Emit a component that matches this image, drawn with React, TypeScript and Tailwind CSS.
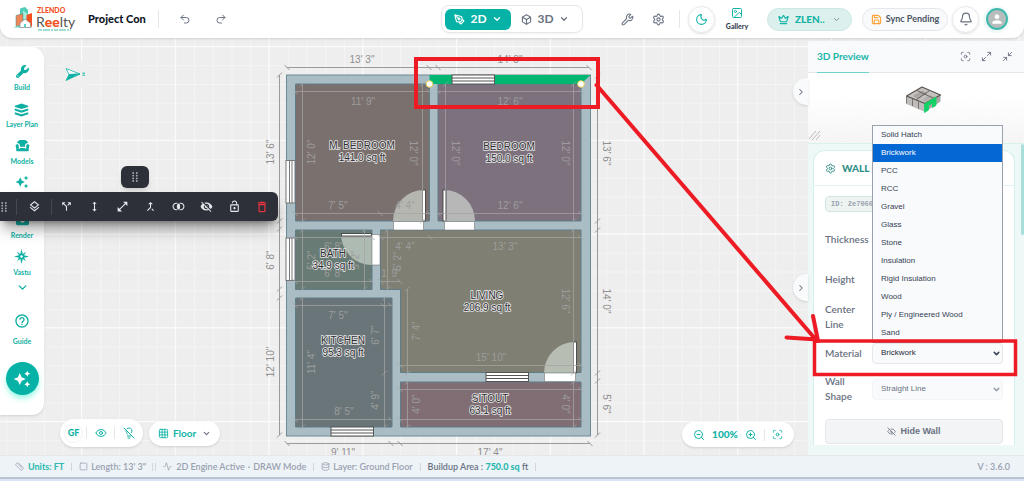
import type { ReactNode } from "react";
import {
  Activity,
  Bell,
  Box,
  ChevronDown,
  ChevronRight,
  Crown,
  Database,
  Eye,
  EyeOff,
  Focus,
  Grid3x3,
  Image as ImageIcon,
  LightbulbOff,
  Maximize2,
  Minimize2,
  Moon,
  PenTool,
  Redo2,
  Ruler,
  Save,
  Settings,
  Square,
  Undo2,
  Wrench,
  ZoomIn,
  ZoomOut,
} from "lucide-react";
import { FaCamera, FaWrench } from "react-icons/fa6";
import { RiSofaFill } from "react-icons/ri";
import {
  MdAutoAwesome,
  MdCallMerge,
  MdCallSplit,
  MdDeleteOutline,
  MdHeight,
  MdHelpOutline,
  MdJoinInner,
  MdLockOpen,
  MdOpenInFull,
  MdOutlineLayers,
  MdPerson,
  MdVisibilityOff,
} from "react-icons/md";

type Dim = {
  dir: "h" | "v";
  at: number;
  ticks: number[];
};

type Label = [text: string, x: number, y: number, rotate?: number];

const outerDims: Dim[] = [
  { dir: "h", at: 67.5, ticks: [287, 429, 438, 589] },
  { dir: "h", at: 443.5, ticks: [287, 391, 400, 590] },
  { dir: "v", at: 279.5, ticks: [75, 221, 229, 289, 298, 435] },
  { dir: "v", at: 597.5, ticks: [76, 221, 230, 373, 381, 435] },
];

const outerLabels: Label[] = [
  [`13' 3"`, 362, 59],
  [`14' 8"`, 510, 59],
  [`9' 11"`, 343, 452],
  [`17' 4"`, 490, 452],
  [`13' 6"`, 270, 152, -90],
  [`6' 8"`, 270, 260, -90],
  [`12' 10"`, 270, 362, -90],
  [`13' 6"`, 606, 153, 90],
  [`14' 0"`, 606, 301, 90],
  [`5' 6"`, 606, 404, 90],
];

const innerDims: Dim[] = [
  { dir: "h", at: 91.5, ticks: [295, 429] },
  { dir: "h", at: 91.5, ticks: [438, 581] },
  { dir: "h", at: 213.5, ticks: [295, 380, 429] },
  { dir: "h", at: 213.5, ticks: [438, 581] },
  { dir: "v", at: 302.5, ticks: [84, 221] },
  { dir: "v", at: 422.5, ticks: [84, 221] },
  { dir: "v", at: 445.5, ticks: [84, 221] },
  { dir: "v", at: 573.5, ticks: [84, 221] },
  { dir: "h", at: 237.5, ticks: [295, 372] },
  { dir: "h", at: 281.5, ticks: [295, 372] },
  { dir: "v", at: 302.5, ticks: [230, 289] },
  { dir: "v", at: 364.5, ticks: [230, 289] },
  { dir: "h", at: 237.5, ticks: [381, 430, 581] },
  { dir: "h", at: 281.5, ticks: [381, 400] },
  { dir: "v", at: 387.5, ticks: [230, 289] },
  { dir: "v", at: 573.5, ticks: [230, 373] },
  { dir: "v", at: 407.5, ticks: [289, 373] },
  { dir: "h", at: 365.5, ticks: [400, 581] },
  { dir: "h", at: 305.5, ticks: [295, 383, 391] },
  { dir: "h", at: 419.5, ticks: [295, 391] },
  { dir: "v", at: 302.5, ticks: [298, 427] },
  { dir: "v", at: 384.5, ticks: [298, 373, 427] },
  { dir: "h", at: 389.5, ticks: [400, 581] },
  { dir: "h", at: 419.5, ticks: [400, 581] },
  { dir: "v", at: 407.5, ticks: [382, 427] },
  { dir: "v", at: 573.5, ticks: [382, 427] },
];

const innerLabels: Label[] = [
  [`11' 9"`, 363, 101],
  [`12' 0"`, 311, 152, -90],
  [`12' 0"`, 413, 153, 90],
  [`7' 5"`, 338, 205],
  [`4' 4"`, 405, 205],
  [`12' 6"`, 510, 101],
  [`12' 0"`, 455, 153, 90],
  [`12' 0"`, 565, 153, 90],
  [`12' 6"`, 510, 205],
  [`6' 8"`, 334, 246],
  [`6' 8"`, 334, 273],
  [`5' 2"`, 311, 260, -90],
  [`5' 2"`, 355, 260, -90],
  [`4' 4"`, 405, 246],
  [`5' 2"`, 397, 261, -90],
  [`1' 9"`, 391, 273],
  [`13' 3"`, 505, 246],
  [`12' 6"`, 565, 301, 90],
  [`7' 4"`, 416, 331, -90],
  [`15' 10"`, 491, 357],
  [`7' 5"`, 338, 315],
  [`11' 4"`, 311, 362, -90],
  [`6' 7"`, 375, 335, -90],
  [`4' 9"`, 375, 400, -90],
  [`8' 5"`, 344, 411],
  [`4' 0"`, 416, 404, -90],
  [`4' 0"`, 565, 404, 90],
];

const rooms = [
  { name: "M. BEDROOM", area: "141.0 sq ft", x: 362, y: 146, fill: "#7a706e", points: "295.5,84 429.5,84 429.5,221 295.5,221" },
  { name: "BEDROOM", area: "150.0 sq ft", x: 509, y: 147, fill: "#7d717e", points: "438,84 581,84 581,221 438,221" },
  { name: "BATH", area: "34.9 sq ft", x: 333, y: 254, fill: "#687b74", points: "295.5,230 372,230 372,289.5 295.5,289.5" },
  { name: "LIVING", area: "206.9 sq ft", x: 487, y: 296, fill: "#7f7f73", points: "380.5,230 581,230 581,372.5 400.5,372.5 400.5,289.5 380.5,289.5" },
  { name: "KITCHEN", area: "95.3 sq ft", x: 343, y: 341, fill: "#697578", points: "295.5,298 392,298 392,427 295.5,427" },
  { name: "SITOUT", area: "63.1 sq ft", x: 490, y: 399, fill: "#806e74", points: "400.5,382 581,382 581,427 400.5,427" },
];

const doors = [
  { sector: "M424 221 L424 190 A31 31 0 0 0 393 221 Z", leaf: [422.5, 190, 3, 31], gap: [393.5, 221.5, 30, 8.5] },
  { sector: "M444 221 L444 190 A31 31 0 0 1 475 221 Z", leaf: [443, 190, 3, 31], gap: [444.5, 221.5, 30, 8.5] },
  { sector: "M372 234 L341 234 A31 31 0 0 0 372 265 Z", leaf: [341.5, 233.5, 30, 2.5], gap: [372, 234.5, 8, 30.5] },
  { sector: "M575 373 L575 342 A31 31 0 0 0 544 373 Z", leaf: [573.5, 342, 3, 31], gap: [544.5, 373, 31, 8.5] },
];

const windowsH = [
  [452, 75],
  [331, 427],
  [486, 372.5],
];
const windowsV = [
  [286, 160.5],
  [286, 238],
];

function DimLine({ dir, at, ticks }: Dim) {
  const a = ticks[0];
  const b = ticks[ticks.length - 1];
  return (
    <g>
      {dir === "h" ? <path d={`M${a} ${at}H${b}`} /> : <path d={`M${at} ${a}V${b}`} />}
      {ticks.map((t) =>
        dir === "h" ? (
          <path key={t} d={`M${t - 2.5} ${at - 2.5}l5 5`} />
        ) : (
          <path key={t} d={`M${at - 2.5} ${t + 2.5}l5 -5`} />
        ),
      )}
    </g>
  );
}

function DimLabels({ items }: { items: Label[] }) {
  return (
    <>
      {items.map(([text, x, y, rotate = 0], i) => (
        <text key={i} transform={`translate(${x} ${y}) rotate(${rotate})`} dy="3.5" textAnchor="middle">
          {text}
        </text>
      ))}
    </>
  );
}

function FloorPlan() {
  return (
    <svg className="absolute inset-0 h-full w-full font-['Liberation_Sans',sans-serif]" aria-label="Floor plan">
      <defs>
        <pattern id="minor" x="81.5" y="46.5" width="18.75" height="18.75" patternUnits="userSpaceOnUse">
          <path d="M0 .5H19M.5 0V19" stroke="#f4f4f4" fill="none" />
        </pattern>
        <pattern id="major" x="81" y="46" width="93.75" height="93.75" patternUnits="userSpaceOnUse">
          <path d="M0 .5H94M.5 0V94" stroke="#fcfcfc" fill="none" />
        </pattern>
      </defs>
      <rect width="100%" height="100%" fill="#eeeeee" />
      <rect width="100%" height="100%" fill="url(#minor)" />
      <rect width="100%" height="100%" fill="url(#major)" />

      {/* North marker */}
      <rect x="62" y="61" width="24" height="27" fill="#efefef" />
      <path d="M66 68.5 80 74 69 74.5Z" fill="#fff" stroke="#12b3a6" strokeWidth=".8" />
      <path d="M80 74 66 80.5 69 74.5Z" fill="#12b3a6" stroke="#12b3a6" strokeWidth=".8" />
      <path d="M82.5 73.2h2.5M82.5 75.2h2.5" stroke="#12b3a6" />

      <rect x="286.5" y="75" width="304" height="361" fill="#abbdc4" stroke="#6b8b96" />
      {rooms.map((r) => (
        <polygon key={r.name} points={r.points} fill={r.fill} stroke="#5f7d88" />
      ))}

      {/* Selected wall */}
      <path d="M429.5 75H590.5L581 84H429.5Z" fill="#00b670" />

      {doors.map((d) => (
        <g key={d.sector}>
          <path d={d.sector} fill="#e8f0e8" fillOpacity=".55" />
          <rect x={d.leaf[0]} y={d.leaf[1]} width={d.leaf[2]} height={d.leaf[3]} fill="#fff" stroke="#444" strokeWidth=".9" />
          <rect x={d.gap[0]} y={d.gap[1]} width={d.gap[2]} height={d.gap[3]} fill="#fff" stroke="#777" strokeWidth=".6" />
        </g>
      ))}
      {windowsH.map(([x, y]) => (
        <g key={`${x}-${y}`} stroke="#555">
          <rect x={x} y={y} width="42.5" height="9" fill="#fff" />
          <path d={`M${x} ${y + 3}h42.5M${x} ${y + 6}h42.5`} />
        </g>
      ))}
      {windowsV.map(([x, y]) => (
        <g key={`${x}-${y}`} stroke="#777">
          <rect x={x} y={y} width="9" height="42.5" fill="#fff" />
          <path d={`M${x + 3.5} ${y}v42.5M${x + 6} ${y}v42.5`} />
        </g>
      ))}

      <g stroke="#a4a4a4" strokeOpacity=".75" fill="none">
        {innerDims.map((d, i) => (
          <DimLine key={i} {...d} />
        ))}
      </g>
      <g stroke="#9a9a9a" fill="none">
        {outerDims.map((d, i) => (
          <DimLine key={i} {...d} />
        ))}
      </g>
      <g fill="#9d9d9d" fontSize="10">
        <DimLabels items={innerLabels} />
      </g>
      <g fill="#8f8f8f" fontSize="10">
        <DimLabels items={outerLabels} />
      </g>

      <g fill="#2f2f33" stroke="#e6e6e6" strokeWidth="1.6" paintOrder="stroke" fontSize="10" textAnchor="middle">
        {rooms.map((r) => (
          <g key={r.name}>
            <text x={r.x} y={r.y + 3}>{r.name}</text>
            <text x={r.x} y={r.y + 15}>{r.area}</text>
          </g>
        ))}
      </g>

      <g fill="#fff" stroke="#ecd35a">
        <circle cx="429.5" cy="84" r="3.3" />
        <circle cx="581" cy="84" r="3.3" />
      </g>
    </svg>
  );
}

function Logo() {
  return (
    <svg width="66" height="26" viewBox="0 0 66 26" role="img" aria-label="Zlendo Realty">
      <path d="M7 2.5 12 1l3 3v17H7Z" fill="#4fcdb9" />
      <path d="M10 4.500l4 3v8l-4-2Z" fill="#a5efe0" />
      <path d="M3 9.500l7-2v11l-7 2Z" fill="#f0875c" stroke="#3a8f84" strokeWidth=".5" />
      <path d="M13.500 9 19 7v14l-5.500-4Z" fill="#f4511e" />
      <path d="M0 21.500 8 19l4-5.500 7 8Z" fill="#5fd3c0" />
      <path d="M7 21.500v-4.500l5-4 5.500 4v4.500Z" fill="#fff" stroke="#777" strokeWidth=".6" />
      <path d="M11 18h2v3h-2Z" fill="#5fd3c0" />
      <text x="24" y="7" fontSize="7" fontWeight="900" fill="#f4511e" fontFamily="Lato, sans-serif">
        ZLENDO
      </text>
      <text x="23" y="21" fontSize="14" fill="#555" fontFamily="Lato, sans-serif">
        R<tspan fontWeight="900" fill="#f4511e">ee</tspan>lty
      </text>
      <path d="M25 24h33" stroke="#3fbfae" strokeDasharray="4 1 7 1 2 1" />
    </svg>
  );
}

function Header() {
  return (
    <header className="relative z-10 grid h-[38px] grid-cols-[1fr_auto_1fr] items-center rounded-b-xl bg-white shadow-sm">
      <div className="flex items-center pl-[13px]">
        <Logo />
        <h1 className="ml-[9px] text-[11px] font-black text-gray-900">Project Con</h1>
        <span className="ml-3 h-[18px] w-px bg-gray-200" />
        <div className="ml-5 flex gap-6 text-gray-500">
          <button aria-label="Undo">
            <Undo2 size={12} />
          </button>
          <button aria-label="Redo">
            <Redo2 size={12} />
          </button>
        </div>
      </div>

      <div className="flex h-7 items-center rounded-lg border border-gray-200 p-[3px] text-xs font-bold shadow-xs">
        <button className="flex h-[21px] w-[66px] items-center justify-center gap-[5px] rounded-md bg-[#06b1a5] text-white">
          <PenTool size={11} strokeWidth={2.5} />
          2D
          <ChevronDown size={10} strokeWidth={3} />
        </button>
        <button className="flex h-[21px] w-[68px] items-center justify-center gap-[5px] text-gray-500">
          <Box size={11} strokeWidth={2.5} />
          3D
          <ChevronDown size={10} strokeWidth={3} />
        </button>
      </div>

      <div className="flex items-center justify-end pr-[14px] text-gray-500">
        <button aria-label="Tools" className="mr-[18px]">
          <Wrench size={13} />
        </button>
        <button aria-label="Settings" className="mr-[14px]">
          <Settings size={13} />
        </button>
        <span className="h-[18px] w-px bg-gray-200" />
        <button
          aria-label="Dark mode"
          className="ml-2 flex size-[27px] items-center justify-center rounded-full border border-gray-200 text-[#12b3a6] shadow-sm"
        >
          <Moon size={13} />
        </button>
        <button className="ml-[6px] flex w-8 flex-col items-center gap-[3px] text-[7px] leading-[9px] font-black text-gray-700">
          <ImageIcon size={12} className="text-[#12b3a6]" />
          Gallery
        </button>
        <button className="ml-[14px] flex h-[23px] w-[85px] items-center rounded-full border border-[#cbe8e5] bg-[#dcf1ee] px-[10px] text-[10px] font-black text-[#12b3a6]">
          <Crown size={11} strokeWidth={2.5} className="mr-[6px]" />
          ZLEN..
          <ChevronDown size={9} className="ml-auto text-gray-500" />
        </button>
        <button className="ml-[10px] flex h-[23px] w-[86px] items-center justify-center gap-1 rounded-full border border-gray-200 bg-gray-50 text-[9px] font-bold whitespace-nowrap text-gray-600">
          <Save size={11} strokeWidth={2.5} className="text-[#fba63c]" />
          Sync Pending
        </button>
        <button
          aria-label="Notifications"
          className="ml-1 flex size-[27px] items-center justify-center rounded-full border border-gray-200 shadow-sm"
        >
          <Bell size={14} />
        </button>
        <button aria-label="Account" className="ml-1 flex size-[27px] items-center justify-center rounded-full bg-[#effaf8]">
          <span className="flex size-[22px] items-center justify-center rounded-full border-2 border-[#3fb8ad] bg-[#b9bcbc] text-white">
            <MdPerson size={14} />
          </span>
        </button>
      </div>
    </header>
  );
}

function SideItem({ icon, label, text }: { icon: ReactNode; label?: string; text?: string }) {
  return (
    <button aria-label={label} className="flex h-[29px] flex-col items-center justify-between text-[7px] leading-[9px] font-bold whitespace-nowrap">
      <span className="flex h-4 items-center">{icon}</span>
      {text}
    </button>
  );
}

function VastuIcon() {
  return (
    <svg width="15" height="15" viewBox="0 0 24 24" fill="currentColor" aria-hidden="true">
      <path d="M12 0 14 8 19.500 4.500 16 10 24 12 16 14 19.500 19.500 14 16 12 24 10 16 4.500 19.500 8 14 0 12 8 10 4.500 4.500 10 8Z" />
      <circle cx="12" cy="12" r="2" fill="#fff" />
    </svg>
  );
}

function StackIcon() {
  return (
    <svg width="15" height="14" viewBox="0 0 30 28" fill="currentColor" className="mt-1" aria-hidden="true">
      <path d="M15 1 28 5.500Q29.500 7 28 8L15 12 2 8Q.5 7 2 5.500Z" />
      <path d="M1.500 11 15 15.200 28.500 11V15L15 19.500 1.500 15Z" />
      <path d="M1.500 18.500 15 22.700 28.500 18.500V22.500L15 27 1.500 22.500Z" />
    </svg>
  );
}

function Sidebar() {
  return (
    <nav className="relative mt-[9px] flex w-11 shrink-0 flex-col items-center gap-2 self-start rounded-r-xl bg-white pt-4 pb-5 text-[#0fb0a3] shadow-sm">
      <SideItem icon={<FaWrench size={13} />} text="Build" />
      <SideItem icon={<StackIcon />} text="Layer Plan" />
      <SideItem icon={<RiSofaFill size={15} />} text="Models" />
      <SideItem icon={<MdAutoAwesome size={14} />} label="AI" />
      <SideItem icon={<FaCamera size={13} />} text="Render" />
      <SideItem icon={<VastuIcon />} text="Vastu" />
      <button aria-label="More" className="-mt-2 h-5">
        <ChevronDown size={13} strokeWidth={2.5} />
      </button>
      <button className="mt-2 flex flex-col items-center gap-2 text-[7px] leading-[9px] font-bold">
        <MdHelpOutline size={16} />
        Guide
      </button>
      <button
        aria-label="Assistant"
        className="mt-2 flex size-[33px] items-center justify-center rounded-full bg-[#06b1a5] text-white shadow-md shadow-teal-200"
      >
        <MdAutoAwesome size={18} />
      </button>
    </nav>
  );
}

function Grip({ className = "" }: { className?: string }) {
  return (
    <svg width="6" height="10" viewBox="0 0 6 10" fill="#a8abb2" className={className} aria-hidden="true">
      {[1, 3.7, 6.4, 9].map((y) => (
        <g key={y}>
          <circle cx="1.200" cy={y} r=".9" />
          <circle cx="4.800" cy={y} r=".9" />
        </g>
      ))}
    </svg>
  );
}

const tools = [
  { name: "Split", Icon: MdCallSplit },
  { name: "Height", Icon: MdHeight },
  { name: "Stretch", Icon: MdOpenInFull },
  { name: "Merge", Icon: MdCallMerge },
  { name: "Join", Icon: MdJoinInner },
  { name: "Hide", Icon: MdVisibilityOff },
  { name: "Unlock", Icon: MdLockOpen },
];

function WallToolbar() {
  return (
    <>
      <div className="absolute top-[166px] left-[121px] z-20 flex h-[22px] w-7 items-center justify-center rounded-md bg-[#2d3038] shadow-md">
        <Grip />
      </div>
      <div className="absolute top-[192px] left-0 z-20 flex h-[29px] items-center rounded-r-md bg-[#2d3038] pr-[2px] pl-px text-gray-200 shadow-lg shadow-black/40">
        <Grip />
        <span className="ml-[9px] h-4 w-px bg-[#454851]" />
        <button aria-label="Layers" className="flex w-[34px] justify-center">
          <MdOutlineLayers size={13} />
        </button>
        <span className="h-4 w-px bg-[#454851]" />
        {tools.map(({ name, Icon }) => (
          <button key={name} aria-label={name} className="flex w-7 justify-center">
            <Icon size={13} />
          </button>
        ))}
        <button aria-label="Delete" className="flex w-7 justify-center text-[#ef3340]">
          <MdDeleteOutline size={14} />
        </button>
      </div>
    </>
  );
}

function CanvasControls() {
  return (
    <div className="relative flex flex-1 items-end justify-between pr-[14px] pb-2 pl-4 text-[#12b3a6]">
      <div className="flex items-center gap-[6px]">
        <div className="flex h-7 items-center rounded-full bg-white px-1 shadow-sm">
          <button className="size-[19px] rounded-full border border-gray-100 text-[9px] font-black">GF</button>
          <span className="mx-[3px] h-3 w-px bg-gray-200" />
          <button aria-label="Show floor" className="flex w-[21px] justify-center">
            <Eye size={12} />
          </button>
          <span className="mx-[3px] h-3 w-px bg-gray-200" />
          <button aria-label="Lights off" className="flex w-[21px] justify-center">
            <LightbulbOff size={12} />
          </button>
        </div>
        <button className="flex h-[25px] items-center rounded-full bg-white px-[9px] text-[10px] font-bold shadow-sm">
          <Grid3x3 size={11} className="mr-1" />
          Floor
          <ChevronDown size={9} strokeWidth={3} className="ml-[6px] text-gray-500" />
        </button>
      </div>
      <div className="flex h-[25px] w-28 items-center justify-between rounded-full bg-white px-[11px] shadow-sm">
        <button aria-label="Zoom out">
          <ZoomOut size={12} />
        </button>
        <span className="text-[10px] font-black">100%</span>
        <button aria-label="Zoom in">
          <ZoomIn size={12} />
        </button>
        <span className="h-3 w-px bg-gray-200" />
        <button aria-label="Fit view">
          <Focus size={11} />
        </button>
      </div>
    </div>
  );
}

function HousePreview() {
  return (
    <svg width="100%" height="100%" aria-label="3D house">
      <defs>
        <pattern id="floor" width="4" height="3" patternUnits="userSpaceOnUse" patternTransform="rotate(-12)">
          <path d="M0 0 4 3M4 0 0 3" stroke="#e3e3e3" strokeWidth=".6" />
        </pattern>
        <linearGradient id="fade" x1="0" y1="0" x2="0" y2="1">
          <stop offset=".3" stopColor="#fff" />
          <stop offset="1" stopColor="#fff" stopOpacity="0" />
        </linearGradient>
      </defs>
      <rect width="100%" height="100%" fill="url(#floor)" />
      <rect width="100%" height="100%" fill="url(#fade)" />
      <path d="M1 66 8 58M4 67 12 58M8 67 12 62" stroke="#aaa" strokeWidth=".8" />
      <g strokeLinejoin="round">
        <path d="M98.500 23 114 14 132.500 22 116 31Z" fill="#c4c1be" />
        <path d="M105 23 114 17.500 119 20 110 26Z" fill="#a9a5a2" />
        <path d="M114 27 121 22 128 24 119 29Z" fill="#b5b1ad" />
        <path d="M98.500 23V31L117 39V30.500Z" fill="#bfbdbb" />
        <path d="M117 30.500 132.500 22V28.500L117 39Z" fill="#a9a7a5" />
        <path d="M98.500 23 114 14 132.500 22 117 30.500Z" fill="none" stroke="#58534f" strokeWidth="1.200" />
        <path d="M108 27 121 18M109 17.500 126 25.500" fill="none" stroke="#6b6561" strokeWidth="1" />
        <path d="M104.500 26v7M110.500 28.500v7.500M98.500 23v7.500" fill="none" stroke="#6f6b68" strokeWidth=".9" />
        <path d="M116.500 31 128 24V32.500L124.500 34.500V30L120.500 32.500V37L116.500 39.500Z" fill="#12d267" stroke="#12d267" strokeWidth=".8" />
      </g>
    </svg>
  );
}

function Row({ id, label, tall, children }: { id?: string; label: string; tall?: boolean; children?: ReactNode }) {
  return (
    <div className={tall ? "flex h-10 items-center" : "flex h-9 items-center"}>
      <label htmlFor={id} className="w-[47px] shrink-0 pr-2 text-[10px] leading-[15px] font-semibold text-gray-500">
        {label}
      </label>
      {children}
    </div>
  );
}

const materials = [
  "Solid Hatch",
  "Brickwork",
  "PCC",
  "RCC",
  "Gravel",
  "Glass",
  "Stone",
  "Insulation",
  "Rigid Insulation",
  "Wood",
  "Ply / Engineered Wood",
  "Sand",
];

function CollapseTab({ className }: { className: string }) {
  return (
    <button
      aria-label="Collapse panel"
      className={`absolute -left-[15px] flex h-[27px] w-[15px] items-center justify-center rounded-l-full bg-gray-50 text-gray-500 shadow-sm ${className}`}
    >
      <ChevronRight size={10} strokeWidth={2.5} />
    </button>
  );
}

function PropertiesPanel() {
  return (
    <aside className="relative mt-[3px] flex w-[216px] shrink-0 flex-col bg-[#eef8f7]">
      <CollapseTab className="top-[37px]" />
      <CollapseTab className="top-[233px]" />
      <div className="flex h-8 items-stretch border-b border-gray-200 bg-[#f8fafc] pl-[9px]">
        <h2 className="-mb-[2px] flex items-center border-b-2 border-[#6fd3cb] text-[10px] font-bold text-[#20b5a9]">3D Preview</h2>
        <div className="mr-[11px] ml-auto flex items-center gap-[10px] text-gray-500">
          <button aria-label="Center view">
            <Focus size={11} />
          </button>
          <button aria-label="Expand">
            <Maximize2 size={11} />
          </button>
          <button aria-label="Shrink">
            <Minimize2 size={11} />
          </button>
        </div>
      </div>
      <div className="h-[70px] bg-white">
        <HousePreview />
      </div>

      <div className="flex flex-1 border-t border-[#d8f0ee]">
        <section className="mt-[6px] mr-[6px] mb-[10px] ml-[5px] flex-1 rounded-t-xl border border-b-0 border-[#d3f0ed] bg-white">
          <h3 className="flex h-[35px] items-center gap-[6px] border-b border-[#e2f4f2] px-[11px] text-[10px] font-black text-[#2f8f86]">
            <Settings size={11} />
            WALL I
          </h3>
          <div className="px-[11px] pt-[10px]">
            <div className="mb-[7px] flex h-4 items-center rounded-sm border border-[#d3e6e2] bg-[#edf4f2] px-[5px] font-['Liberation_Mono',monospace] text-[7px] font-bold text-gray-400">
              ID: 2e7066
            </div>
            <Row label="Thickness" tall />
            <Row label="Height" tall />
            <Row label="Center Line" />
            <Row id="material" label="Material">
              <div className="relative flex-1 font-['Liberation_Sans',sans-serif] text-[8px]">
                <select
                  id="material"
                  defaultValue="Brickwork"
                  className="block h-[21px] w-full appearance-none rounded-sm border border-gray-200 bg-gray-50 px-2 font-medium text-gray-800"
                >
                  {materials.map((m) => (
                    <option key={m}>{m}</option>
                  ))}
                </select>
                <ChevronDown size={9} strokeWidth={4} className="pointer-events-none absolute top-[6px] right-[2px] text-gray-700" />
                <ul className="absolute right-0 bottom-full left-0 border border-gray-400 bg-[#f8fafc] text-gray-700">
                  {materials.map((m) => (
                    <li key={m} className={m === "Brickwork" ? "h-[18px] bg-[#0468d4] px-2 leading-[18px] text-white" : "h-[18px] px-2 leading-[18px]"}>
                      {m}
                    </li>
                  ))}
                </ul>
              </div>
            </Row>
            <Row id="shape" label="Wall Shape">
              <div className="relative flex-1 font-['Liberation_Sans',sans-serif] text-[8px]">
                <select
                  id="shape"
                  className="block h-[21px] w-full appearance-none rounded-sm border border-gray-100 bg-gray-50 px-2 text-gray-500"
                >
                  <option>Straight Line</option>
                </select>
                <ChevronDown size={9} strokeWidth={4} className="pointer-events-none absolute top-[6px] right-[2px] text-gray-400" />
              </div>
            </Row>
            <button className="mt-3 flex h-[25px] w-full items-center justify-center gap-1 rounded-sm border border-gray-200 bg-gray-100 font-['Liberation_Sans',sans-serif] text-[9px] font-bold text-gray-500">
              <EyeOff size={9} />
              Hide Wall
            </button>
          </div>
        </section>
        <span className="h-[91px] w-[3px] rounded-sm bg-[#a9dfdb]" />
      </div>
    </aside>
  );
}

function Divider() {
  return <span className="mx-[7px] h-2 w-px bg-gray-300" />;
}

function StatusBar() {
  return (
    <footer className="relative border-t border-gray-200 bg-[#eef3f8] text-[9px] text-gray-400">
      <div className="flex h-[21px] items-center pr-[14px] pl-[15px] font-semibold whitespace-nowrap">
        <Ruler size={9} className="mr-1" />
        <span className="font-bold text-[#2ab9ae]">Units: FT</span>
        <Divider />
        <Square size={9} className="mr-[3px]" />
        Length: 13' 3"
        <span className="ml-[6px] h-2 w-px bg-gray-300" />
        <span className="mr-[7px] ml-[2px] h-2 w-px bg-gray-300" />
        <Activity size={9} className="mr-1" />
        2D Engine Active
        <span className="mx-[3px]">·</span>
        DRAW Mode
        <Divider />
        <Database size={9} className="mr-[3px]" />
        Layer: Ground Floor
        <Divider />
        <span className="text-gray-500">
          Buildup Area : <strong className="font-black text-[#2ab9ae]">750.0 sq</strong> ft
        </span>
        <Divider />
        <span className="ml-auto">V : 3.6.0</span>
      </div>
      <div className="h-1 border-t-2 border-[#b9c3d0] bg-[#dbe3f7]" />
    </footer>
  );
}

function Markup() {
  return (
    <svg
      className="pointer-events-none absolute inset-0 z-30 h-full w-full"
      fill="none"
      stroke="#ed1c24"
      strokeWidth="4"
      aria-hidden="true"
    >
      <rect x="416" y="59" width="182" height="48" />
      <rect x="814.500" y="341" width="201" height="33.500" strokeWidth="3.500" />
      <path d="M596.500 85 817 341M786.500 337.500 817 339.500M813 316 818 341" strokeLinecap="round" />
    </svg>
  );
}

export default function App() {
  return (
    <div className="relative flex min-h-screen flex-col overflow-hidden font-[Lato,sans-serif]">
      <FloorPlan />
      <Header />
      <main className="flex flex-1">
        <Sidebar />
        <CanvasControls />
        <PropertiesPanel />
      </main>
      <WallToolbar />
      <StatusBar />
      <Markup />
    </div>
  );
}
